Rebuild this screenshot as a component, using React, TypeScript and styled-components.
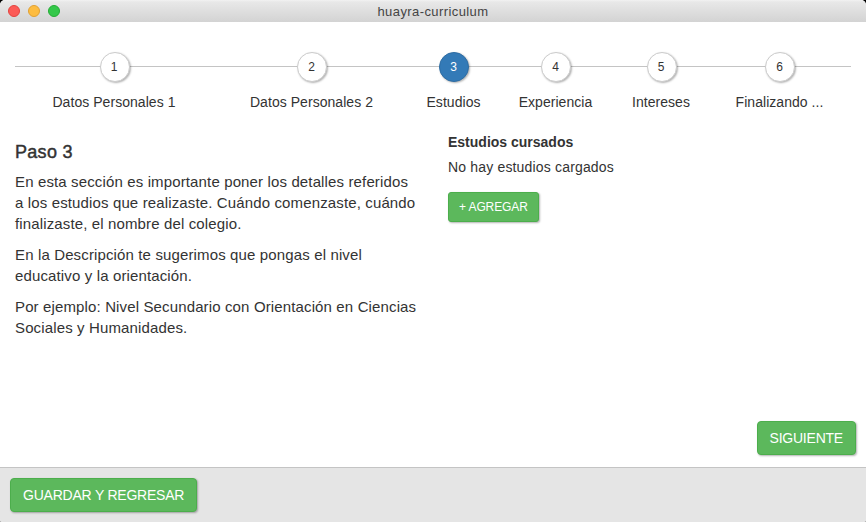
import React from "react";
import styled, { createGlobalStyle } from "styled-components";

const GlobalStyle = createGlobalStyle`
  * { box-sizing: border-box; }
  html, body { margin: 0; padding: 0; background: #000; }
  body {
    font-family: "Liberation Sans", Arial, Helvetica, sans-serif;
    font-size: 14px;
    line-height: 20px;
    color: #333;
    overflow: hidden;
  }
  #root { background: linear-gradient(#000 50%, #aaa 50%); }
`;

const Window = styled.div`
  display: flex;
  flex-direction: column;
  width: 866px;
  height: 522px;
  background: #fff;
  border-radius: 5px 5px 3px 3px;
  overflow: hidden;
`;

const TitleBar = styled.header`
  display: grid;
  grid-template-columns: 1fr auto 1fr;
  align-items: center;
  height: 22px;
  flex: none;
  padding: 0 8px;
  background: linear-gradient(#f2f2f2 0, #e8e8e8 2px, #d3d3d3 100%);
`;

const Lights = styled.div`
  display: flex;
  gap: 8px;
  margin-top: -1px;
`;

const Light = styled.span<{ $fill: string; $edge: string }>`
  width: 12px;
  height: 12px;
  border-radius: 50%;
  background: ${(p) => p.$fill};
  border: 1px solid ${(p) => p.$edge};
`;

const Title = styled.div`
  font-size: 13px;
  line-height: 22px;
  color: #444;
  letter-spacing: 0.41px;
  padding-top: 1px;
`;

const Steps = styled.nav`
  display: grid;
  grid-template-columns: 199px 196px 88px 116px 95px 142px;
  margin: 30px 15px 0;
  background: linear-gradient(#c4c4c4, #c4c4c4) 0 14px / 100% 1px no-repeat;
`;

const Step = styled.div`
  display: flex;
  flex-direction: column;
  align-items: center;
`;

const StepCircle = styled.span<{ $active: boolean }>`
  width: 30px;
  height: 30px;
  border-radius: 50%;
  border: 1px solid ${(p) => (p.$active ? "#2e6da4" : "#ccc")};
  background: ${(p) => (p.$active ? "#337ab7" : "#fff")};
  color: ${(p) => (p.$active ? "#fff" : "#333")};
  box-shadow: 1px 1px 2px rgba(0, 0, 0, 0.3);
  font-size: 12px;
  line-height: 28px;
  text-align: center;
  padding-right: 1px;
`;

const StepLabel = styled.span`
  margin-top: 10px;
  white-space: nowrap;
  padding-right: 1px;
  letter-spacing: 0.05px;
`;

const Content = styled.main`
  display: grid;
  grid-template-columns: 433px 1fr;
  flex: 1;
  padding: 20px 15px 0;
`;

const Intro = styled.section`
  font-size: 15px;
  line-height: 21px;
  letter-spacing: 0.135px;
  white-space: nowrap;
`;

const Heading = styled.h4`
  margin: 10px 0 9px;
  font-size: 18px;
  line-height: 20px;
  font-weight: 500;
  letter-spacing: 0.3px;
  -webkit-text-stroke: 0.45px #333;
`;

const Paragraph = styled.p`
  margin: 0 0 10px;
`;

const Studies = styled.section`
  display: flex;
  flex-direction: column;
  align-items: flex-start;
`;

const StudiesTitle = styled.strong`
  margin-bottom: 5px;
`;

const EmptyText = styled.p`
  margin: 0 0 15px;
  letter-spacing: 0.17px;
`;

const Button = styled.button<{ $small?: boolean }>`
  height: ${(p) => (p.$small ? 30 : 34)}px;
  padding: 0 ${(p) => (p.$small ? 10 : 12)}px;
  border: 1px solid #4cae4c;
  border-radius: ${(p) => (p.$small ? 3 : 4)}px;
  background: #5cb85c;
  color: #fff;
  font: ${(p) => (p.$small ? "12px" : "14px")} "Liberation Sans", Arial, sans-serif;
  letter-spacing: ${(p) => (p.$small ? -0.1 : -0.22)}px;
  text-transform: uppercase;
  white-space: nowrap;
  box-shadow: 1px 1px 2px rgba(0, 0, 0, 0.3);
`;

const Actions = styled.div`
  display: flex;
  justify-content: flex-end;
  padding: 0 10px 12px;
`;

const Footer = styled.footer`
  height: 55px;
  flex: none;
  padding: 10px;
  border-top: 1px solid #c4c4c4;
  background: #e5e5e5;
`;

const steps = [
  "Datos Personales 1",
  "Datos Personales 2",
  "Estudios",
  "Experiencia",
  "Intereses",
  "Finalizando ...",
];

export default function App() {
  return (
    <>
      <GlobalStyle />
      <Window>
        <TitleBar>
          <Lights>
            <Light $fill="#fc5b57" $edge="#e2443f" />
            <Light $fill="#fdbc40" $edge="#e0a033" />
            <Light $fill="#34c84a" $edge="#24ac35" />
          </Lights>
          <Title>huayra-curriculum</Title>
        </TitleBar>
        <Steps>
          {steps.map((label, i) => (
            <Step key={label}>
              <StepCircle $active={i === 2}>{i + 1}</StepCircle>
              <StepLabel>{label}</StepLabel>
            </Step>
          ))}
        </Steps>
        <Content>
          <Intro>
            <Heading>Paso 3</Heading>
            <Paragraph>
              En esta sección es importante poner los detalles referidos
              <br />a los estudios que realizaste. Cuándo comenzaste, cuándo
              <br />
              finalizaste, el nombre del colegio.
            </Paragraph>
            <Paragraph>
              En la Descripción te sugerimos que pongas el nivel
              <br />
              educativo y la orientación.
            </Paragraph>
            <Paragraph>
              Por ejemplo: Nivel Secundario con Orientación en Ciencias
              <br />
              Sociales y Humanidades.
            </Paragraph>
          </Intro>
          <Studies>
            <StudiesTitle>Estudios cursados</StudiesTitle>
            <EmptyText>No hay estudios cargados</EmptyText>
            <Button $small>+ Agregar</Button>
          </Studies>
        </Content>
        <Actions>
          <Button>Siguiente</Button>
        </Actions>
        <Footer>
          <Button>Guardar y regresar</Button>
        </Footer>
      </Window>
    </>
  );
}
